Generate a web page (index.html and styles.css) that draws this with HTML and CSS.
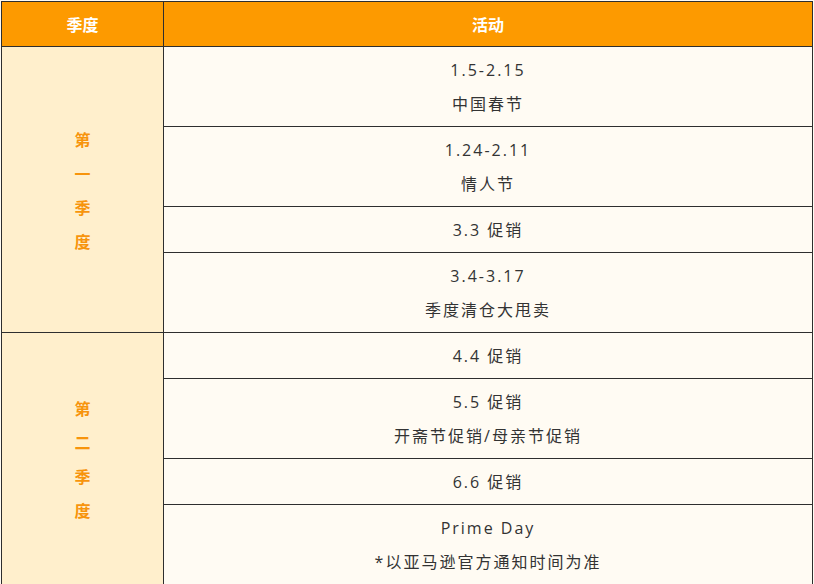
FILE: index.html
```html
<!DOCTYPE html>
<html lang="zh">
<head>
<meta charset="utf-8">
<link rel="stylesheet" href="styles.css">
</head>
<body>
<table class="plan">
  <colgroup><col class="c-season"><col class="c-act"></colgroup>
  <thead>
    <tr><th>季度</th><th>活动</th></tr>
  </thead>
  <tbody>
    <tr>
      <td class="season" rowspan="4">第<br>一<br>季<br>度</td>
      <td class="act">1.5-2.15<br>中国春节</td>
    </tr>
    <tr><td class="act">1.24-2.11<br>情人节</td></tr>
    <tr><td class="act">3.3 促销</td></tr>
    <tr><td class="act">3.4-3.17<br>季度清仓大甩卖</td></tr>
    <tr>
      <td class="season" rowspan="4">第<br>二<br>季<br>度</td>
      <td class="act">4.4 促销</td>
    </tr>
    <tr><td class="act">5.5 促销<br>开斋节促销/母亲节促销</td></tr>
    <tr><td class="act">6.6 促销</td></tr>
    <tr><td class="act">Prime Day<br>*以亚马逊官方通知时间为准</td></tr>
  </tbody>
</table>
</body>
</html>
```
FILE: styles.css
```css
html, body {
  margin: 0;
  padding: 0;
  background: #fffbf3;
}
body {
  padding: 1px 0 0 1px;
  font-family: "Open Sans", "Noto Sans CJK SC", sans-serif;
}
.plan {
  border-collapse: collapse;
  width: 812px;
  table-layout: fixed;
  border: 1px solid #2e2e2e;
}
.c-season { width: 162px; }
.plan th {
  background: #fd9a00;
  color: #fff;
  font-weight: bold;
  font-size: 16px;
  height: 44px;
  padding: 0;
  border: 1px solid #2e2e2e;
  text-align: center;
  vertical-align: middle;
  font-family: "Noto Sans CJK SC", sans-serif;
}
.plan td {
  border: 1px solid #2e2e2e;
  text-align: center;
  vertical-align: middle;
}
.season {
  background: #ffefcc;
  color: #f7940c;
  font-weight: bold;
  font-size: 16px;
  line-height: 34px;
  font-family: "Noto Sans CJK SC", sans-serif;
  padding: 0;
}
.act {
  background: #fffbf3;
  color: #333;
  font-size: 16px;
  letter-spacing: 2px;
  line-height: 34px;
  padding: 5.5px 0;
}
```
